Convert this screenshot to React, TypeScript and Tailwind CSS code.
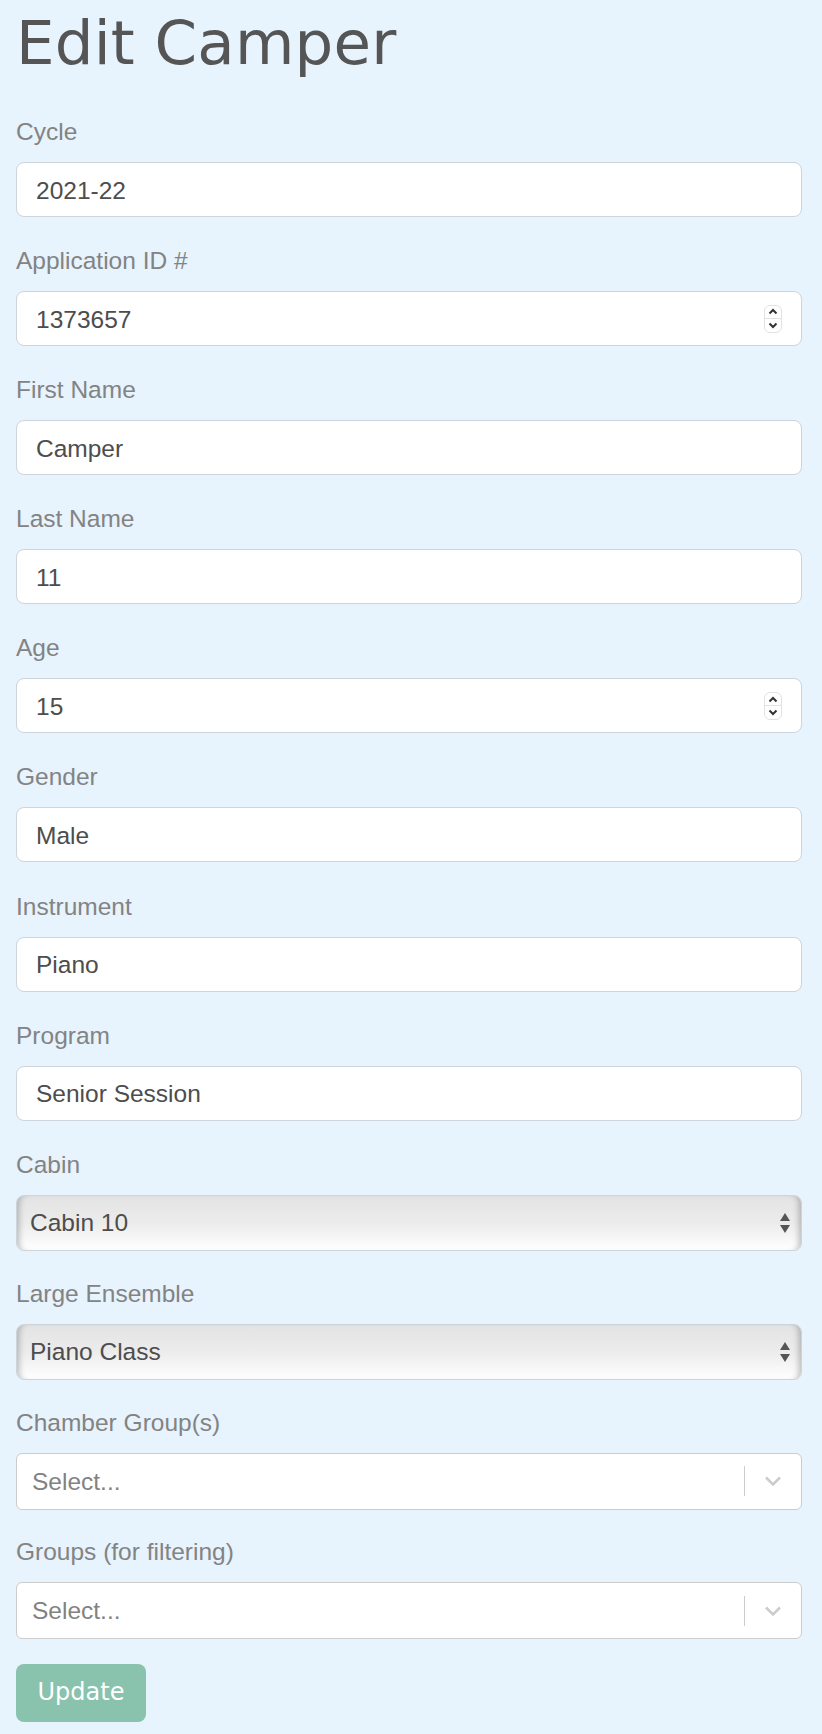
const sans = "font-['Liberation_Sans',Arial,sans-serif]";

function Label({ children }: { children: string }) {
  return (
    <div className={`${sans} text-[24.5px] leading-[28px] text-[#838383] pt-[1px] mb-[16px]`}>
      {children}
    </div>
  );
}

function TextBox({ value, spinner }: { value: string; spinner?: boolean }) {
  return (
    <div className="h-[55px] bg-white border border-[#cdd4da] rounded-[8px] flex items-center pl-[19px] pr-[19px]">
      <span className={`${sans} text-[24.5px] text-[#4d4d4d] flex-1 pt-[3px]`}>{value}</span>
      {spinner && (
        <div className="w-[18px] h-[28px] rounded-[6px] border border-[#e2e2e2] flex flex-col overflow-hidden">
          <div className="flex-1 flex items-center justify-center border-b border-[#e2e2e2]">
            <svg width="10" height="7" viewBox="0 0 10 7">
              <path d="M1.5 5.5 5 2l3.5 3.5" fill="none" stroke="#333" strokeWidth="2" />
            </svg>
          </div>
          <div className="flex-1 flex items-center justify-center">
            <svg width="10" height="7" viewBox="0 0 10 7">
              <path d="M1.5 1.5 5 5l3.5-3.5" fill="none" stroke="#333" strokeWidth="2" />
            </svg>
          </div>
        </div>
      )}
    </div>
  );
}

function NativeSelect({ value }: { value: string }) {
  return (
    <div className="h-[56px] border border-[#cdd4da] rounded-[8px] bg-gradient-to-b from-[#e3e3e3] via-[#ececec] to-[#ffffff] shadow-[inset_7px_0_6px_-5px_rgba(0,0,0,0.25),inset_-7px_0_6px_-5px_rgba(0,0,0,0.25)] flex items-center pl-[13px] pr-[10px]">
      <span className={`${sans} text-[24.5px] text-[#4d4d4d] flex-1 pt-[2px]`}>{value}</span>
      <svg width="12" height="22" viewBox="0 0 12 22">
        <path d="M6 1 11 9H1z" fill="#555" />
        <path d="M6 21 11 13H1z" fill="#555" />
      </svg>
    </div>
  );
}

function MultiSelect() {
  return (
    <div className="h-[57px] bg-white border border-[#cccccc] rounded-[6px] flex items-center pl-[15px]">
      <span className={`${sans} text-[24.5px] text-[#828282] flex-1 pt-[1px]`}>Select...</span>
      <div className="w-px h-[30px] bg-[#cccccc]" />
      <div className="w-[56px] flex items-center justify-center">
        <svg width="18" height="12" viewBox="0 0 18 12">
          <path d="M2 2.5 9 9.5l7-7" fill="none" stroke="#cccccc" strokeWidth="2.5" />
        </svg>
      </div>
    </div>
  );
}

const fields: { label: string; value: string; spinner?: boolean }[] = [
  { label: "Cycle", value: "2021-22" },
  { label: "Application ID #", value: "1373657", spinner: true },
  { label: "First Name", value: "Camper" },
  { label: "Last Name", value: "11" },
  { label: "Age", value: "15", spinner: true },
  { label: "Gender", value: "Male" },
  { label: "Instrument", value: "Piano" },
  { label: "Program", value: "Senior Session" },
];

export default function App() {
  return (
    <div className="min-h-[1734px] bg-[#e7f3fd] pl-4 pr-5">
      <h1 className="font-['DejaVu_Sans',sans-serif] text-[61px] leading-[73px] text-[#555555] pt-[6px] mb-[38px] tracking-[0.2px]">
        Edit Camper
      </h1>

      {fields.map((f) => (
        <div key={f.label} className="mb-[29.1px]">
          <Label>{f.label}</Label>
          <TextBox value={f.value} spinner={f.spinner} />
        </div>
      ))}

      <div className="mb-[28.1px]">
        <Label>Cabin</Label>
        <NativeSelect value="Cabin 10" />
      </div>
      <div className="mb-[28.1px]">
        <Label>Large Ensemble</Label>
        <NativeSelect value="Piano Class" />
      </div>
      <div className="mb-[27.1px]">
        <Label>Chamber Group(s)</Label>
        <MultiSelect />
      </div>
      <div className="mb-[24.5px]">
        <Label>Groups (for filtering)</Label>
        <MultiSelect />
      </div>

      <button className="w-[130px] h-[58px] rounded-[8px] bg-[#89c2ad] text-white font-['DejaVu_Sans',sans-serif] text-[24px] leading-none pb-[2px]">
        Update
      </button>
    </div>
  );
}
